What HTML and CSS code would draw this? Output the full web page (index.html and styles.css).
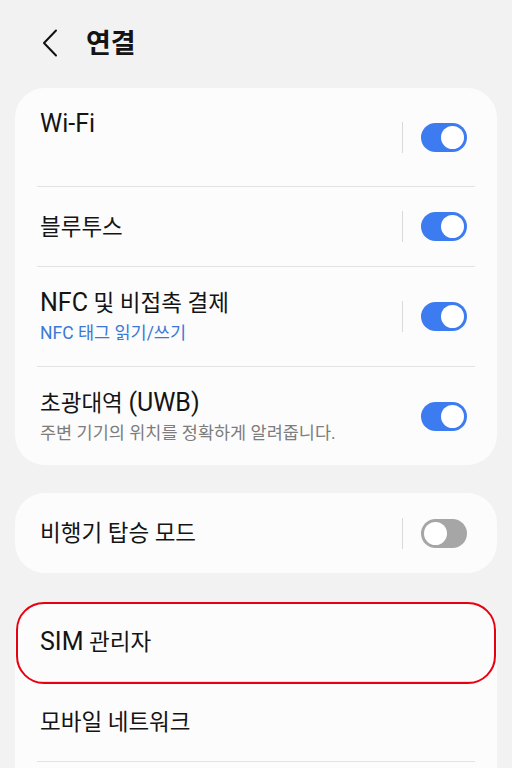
FILE: index.html
```html
<!DOCTYPE html>
<html lang="ko">
<head>
<meta charset="utf-8">
<link rel="stylesheet" href="styles.css">
</head>
<body>
<header class="top">
  <svg class="back" width="16" height="28" viewBox="0 0 16 28"><path d="M14 1.5 L2 14 L14 26.5" fill="none" stroke="#111" stroke-width="2" stroke-linecap="round" stroke-linejoin="round"/></svg>
  <h1 class="title">연결</h1>
</header>

<section class="card">
  <div class="row two">
    <div class="text"><div class="label"><span class="en">Wi-Fi</span></div><div class="sub"></div></div>
    <div class="ctl"><span class="vline"></span><span class="toggle on"></span></div>
  </div>
  <div class="row one">
    <div class="text"><div class="label">블루투스</div></div>
    <div class="ctl"><span class="vline"></span><span class="toggle on"></span></div>
  </div>
  <div class="row two tall">
    <div class="text"><div class="label"><span class="en">NFC</span> 및 비접촉 결제</div><div class="sub blue">NFC 태그 읽기/쓰기</div></div>
    <div class="ctl"><span class="vline"></span><span class="toggle on"></span></div>
  </div>
  <div class="row two last">
    <div class="text"><div class="label">초광대역 <span class="en">(UWB)</span></div><div class="sub gray">주변 기기의 위치를 정확하게 알려줍니다.</div></div>
    <div class="ctl"><span class="toggle on"></span></div>
  </div>
</section>

<section class="card second">
  <div class="row one last">
    <div class="text"><div class="label">비행기 탑승 모드</div></div>
    <div class="ctl"><span class="vline"></span><span class="toggle off"></span></div>
  </div>
</section>

<section class="card open">
  <div class="row one highlight">
    <div class="text"><div class="label"><span class="en">SIM</span> 관리자</div></div>
  </div>
  <div class="row one">
    <div class="text"><div class="label">모바일 네트워크</div></div>
  </div>
</section>
</body>
</html>
```

FILE: styles.css
```css
* { box-sizing: border-box; }
html, body { margin: 0; padding: 0; }
body {
  width: 512px;
  height: 768px;
  overflow: hidden;
  background: #f2f2f2;
  font-family: Roboto, "Noto Sans CJK KR", sans-serif;
  color: #141414;
}
.top {
  height: 88px;
  display: flex;
  align-items: center;
  padding-left: 42px;
  padding-bottom: 4px;
}
.back { display: block; margin-top: 2px; }
.title {
  margin: 0 0 0 28px;
  font-size: 27px;
  font-weight: 700;
  line-height: 36px;
  font-family: "Noto Sans CJK KR", sans-serif;
}
.card {
  margin: 0 15px 28px;
  background: #fcfcfc;
  border-radius: 30px;
}
.card.second { margin-bottom: 29px; }
.card.open { border-radius: 30px 30px 0 0; margin-bottom: 0; padding-bottom: 8px; }
.row {
  margin: 0 22px;
  display: flex;
  align-items: center;
  justify-content: space-between;
  border-bottom: 1px solid #e2e2e2;
  position: relative;
}
.row.last { border-bottom: none; }
.row.two { height: 99px; }
.row.two.tall { height: 100px; }
.row.one { height: 80px; }
.row.two.last { height: 98px; }
.text { padding-left: 3px; }
.label {
  font-size: 22.5px;
  line-height: 30px;
}
.label .en {
  font-size: 25px;
}
.row.two .text { align-self: flex-start; padding-top: 21px; }
.sub {
  margin-top: 3px;
  height: 24px;
  font-size: 17.5px;
  line-height: 24px;
}
.sub.blue { color: #3b78d6; }
.sub.gray { color: #7d7d7d; }
.ctl {
  display: flex;
  align-items: center;
  padding-right: 8px;
}
.vline {
  width: 1px;
  height: 31px;
  background: #d9d9d9;
  margin-right: 18px;
}
.toggle {
  position: relative;
  width: 46px;
  height: 29px;
  border-radius: 15px;
  display: block;
}
.toggle::after {
  content: "";
  position: absolute;
  top: 3px;
  width: 23px;
  height: 23px;
  border-radius: 50%;
  background: #fff;
}
.toggle.on { background: #3c7cf0; }
.toggle.on::after { right: 3px; }
.toggle.off { background: #a6a6a6; }
.toggle.off::after { left: 3px; }
.row.highlight::before {
  content: "";
  position: absolute;
  left: -21px;
  right: -21px;
  top: 0;
  bottom: -3px;
  border: 2.5px solid #e8000e;
  border-radius: 28px;
}
```
